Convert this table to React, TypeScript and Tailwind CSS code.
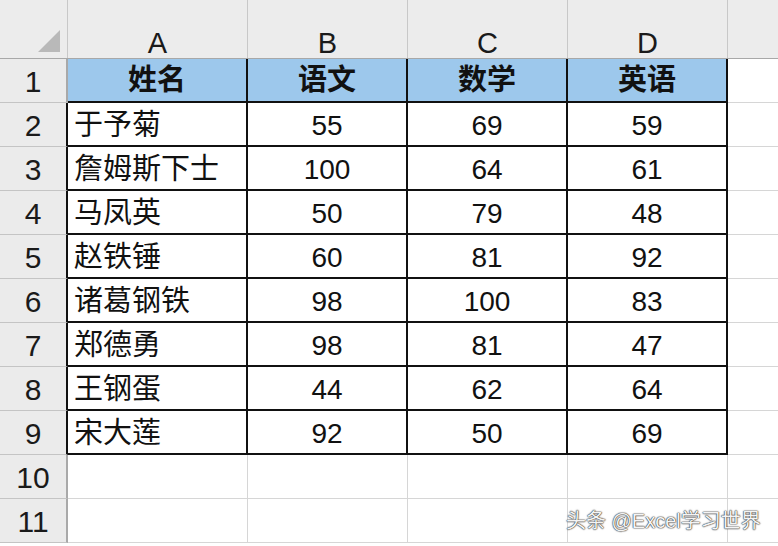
const cols = ['A', 'B', 'C', 'D'];

const data = [
  ['于予菊', '55', '69', '59'],
  ['詹姆斯下士', '100', '64', '61'],
  ['马凤英', '50', '79', '48'],
  ['赵铁锤', '60', '81', '92'],
  ['诸葛钢铁', '98', '100', '83'],
  ['郑德勇', '98', '81', '47'],
  ['王钢蛋', '44', '62', '64'],
  ['宋大莲', '92', '50', '69'],
];

const font = { fontFamily: '"Liberation Sans", "Noto Sans CJK SC", sans-serif' };

function RowHead({ n, dark }: { n: number; dark?: boolean }) {
  return (
    <div
      className={`w-[68px] shrink-0 h-full flex items-center justify-center pt-[2px] bg-[#ebebeb] border-b border-b-[#c4c4c4] text-[30px] text-[#1a1a1a] border-r-2 ${
        dark ? 'border-r-[#111]' : 'border-r-[#a9a9a9]'
      }`}
    >
      {n}
    </div>
  );
}

export default function App() {
  return (
    <div className="w-[778px] h-[546px] overflow-hidden bg-white relative" style={font}>
      {/* column headers */}
      <div className="flex h-[59px] bg-[#ececec] border-b border-b-[#a8a8a8]">
        <div className="w-[68px] shrink-0 border-r border-r-[#c8c8c8] flex items-end justify-end pr-[7px] pb-[6px]">
          <svg width="22" height="22" viewBox="0 0 22 22">
            <polygon points="22,0 22,22 0,22" fill="#b9b9b9" />
          </svg>
        </div>
        {cols.map((c, i) => (
          <div
            key={c}
            className={`${i === 0 ? 'w-[180px]' : 'w-[160px]'} shrink-0 border-r border-r-[#c8c8c8] flex justify-center pt-[29px] text-[29px] leading-[28px] text-[#1a1a1a]`}
          >
            {c}
          </div>
        ))}
        <div className="flex-1" />
      </div>

      {/* header row */}
      <div className="flex h-[44px]">
        <RowHead n={1} />
        {['姓名', '语文', '数学', '英语'].map((h, i) => (
          <div
            key={h}
            className={`${i === 0 ? 'w-[180px]' : 'w-[160px]'} shrink-0 bg-[#9dc8ec] border-r-2 border-r-[#111] border-b-2 border-b-[#111] flex items-center justify-center pt-[2px] font-bold text-[29px] text-[#111]`}
          >
            {h}
          </div>
        ))}
        <div className="flex-1 border-b border-b-[#d6d6d6]" />
      </div>

      {data.map((row, r) => (
        <div key={r} className="flex h-[44px]">
          <RowHead n={r + 2} dark />
          {row.map((v, i) => (
            <div
              key={i}
              className={`${i === 0 ? 'w-[180px] justify-start pl-[6px] text-[29px]' : 'w-[160px] justify-center text-[28px]'} shrink-0 border-r-2 border-r-[#111] border-b-2 border-b-[#111] flex items-center pt-[3px] text-[#111]`}
            >
              {v}
            </div>
          ))}
          <div className="flex-1 border-b border-b-[#d6d6d6]" />
        </div>
      ))}

      {[10, 11].map((n) => (
        <div key={n} className="flex h-[44px]">
          <RowHead n={n} />
          {cols.map((c, i) => (
            <div
              key={c}
              className={`${i === 0 ? 'w-[180px]' : 'w-[160px]'} shrink-0 border-r border-r-[#d6d6d6] border-b border-b-[#d6d6d6]`}
            />
          ))}
          <div className="flex-1 border-b border-b-[#d6d6d6]" />
        </div>
      ))}

      <div className="absolute left-[566px] top-[509px] text-[20px] leading-[24px] text-[#f4f4f4] [text-shadow:0_0_1px_#333,0_0_1px_#333,0_0_2px_#666] whitespace-nowrap">
        头条 @Excel学习世界
      </div>
    </div>
  );
}
